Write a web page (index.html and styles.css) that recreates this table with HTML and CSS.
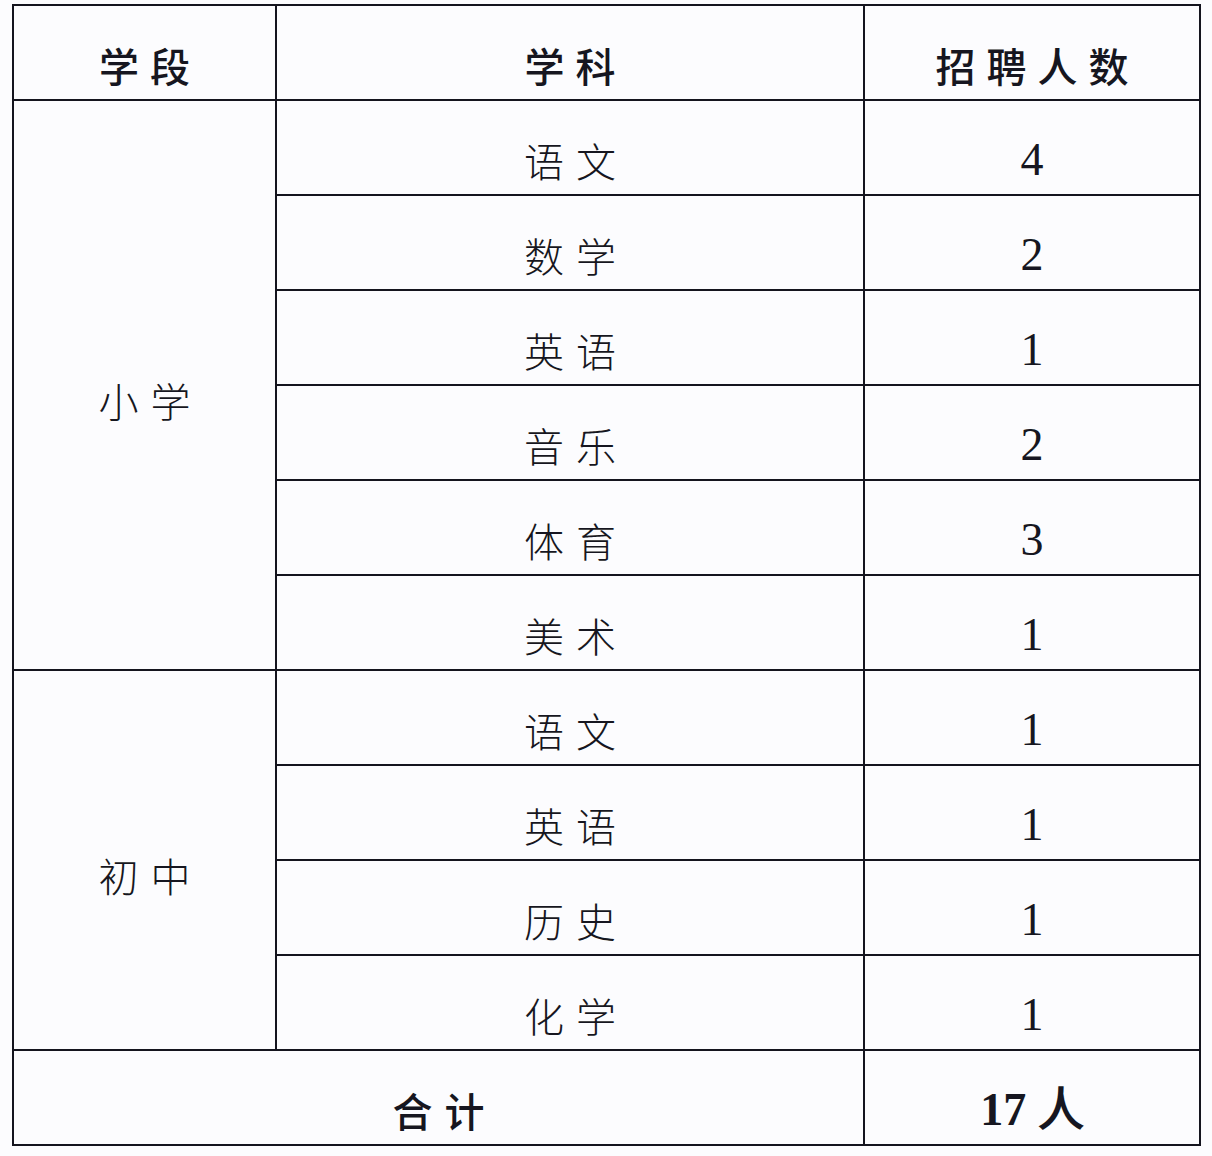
FILE: index.html
```html
<!DOCTYPE html>
<html lang="zh-CN">
<head>
<meta charset="utf-8">
<title>招聘计划</title>
<link rel="stylesheet" href="styles.css">
</head>
<body>
<table class="plan">
  <colgroup>
    <col class="c-stage">
    <col class="c-subject">
    <col class="c-count">
  </colgroup>
  <thead>
    <tr class="head">
      <th>学段</th>
      <th>学科</th>
      <th>招聘人数</th>
    </tr>
  </thead>
  <tbody>
    <tr><td class="stage" rowspan="6">小学</td><td class="subj">语文</td><td class="num">4</td></tr>
    <tr><td class="subj">数学</td><td class="num">2</td></tr>
    <tr><td class="subj">英语</td><td class="num">1</td></tr>
    <tr><td class="subj">音乐</td><td class="num">2</td></tr>
    <tr><td class="subj">体育</td><td class="num">3</td></tr>
    <tr><td class="subj">美术</td><td class="num">1</td></tr>
    <tr><td class="stage" rowspan="4">初中</td><td class="subj">语文</td><td class="num">1</td></tr>
    <tr><td class="subj">英语</td><td class="num">1</td></tr>
    <tr><td class="subj">历史</td><td class="num">1</td></tr>
    <tr><td class="subj">化学</td><td class="num">1</td></tr>
    <tr class="total"><td class="subj sum" colspan="2">合计</td><td class="num sum-num">17 人</td></tr>
  </tbody>
</table>
</body>
</html>
```

FILE: styles.css
```css
html, body {
  margin: 0;
  padding: 0;
  background: #fcfcfe;
}

body {
  padding: 4px 0 0 12px;
  font-family: "Noto Sans CJK SC", "Noto Sans", sans-serif;
  color: #161620;
}

.plan {
  border-collapse: collapse;
  width: 1187px;
  table-layout: fixed;
}

.c-stage { width: 263px; }
.c-subject { width: 588px; }
.c-count { width: 336px; }

.plan th,
.plan td {
  border: 2px solid #14141e;
  text-align: center;
  vertical-align: middle;
  padding: 24px 0 0 0;
  height: 69px;
  box-sizing: border-box;
  line-height: 1;
}

.plan tr {
  height: 95px;
}

.plan th {
  font-size: 40px;
  font-weight: 500;
  letter-spacing: 11px;
  text-indent: 11px;
}

.subj,
.stage {
  font-size: 40px;
  font-weight: 300;
  letter-spacing: 12px;
  text-indent: 12px;
}

.plan td.stage {
  padding-top: 30px;
}

.num {
  font-family: "Liberation Serif", "Times New Roman", serif;
  font-size: 46px;
}

.sum {
  font-weight: 500;
  font-size: 40px;
}

.sum-num {
  font-weight: 700;
}
```
